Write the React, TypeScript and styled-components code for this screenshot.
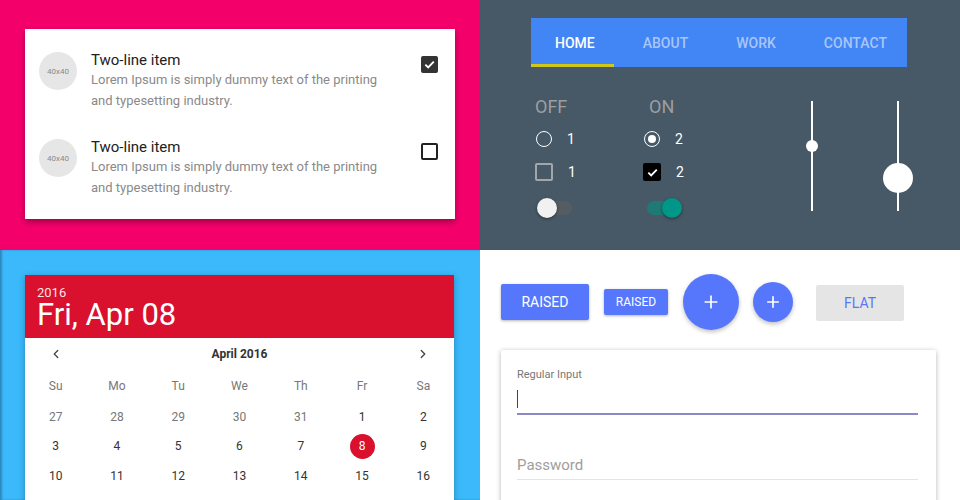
import React from 'react';
import styled, { createGlobalStyle } from 'styled-components';
import { ChevronLeft, ChevronRight, Plus } from 'lucide-react';

const GlobalStyle = createGlobalStyle`
    html, body {
        margin: 0;
        padding: 0;
        background: #fff;
    }
    body {
        font-family: Roboto, "Liberation Sans", sans-serif;
        -webkit-font-smoothing: antialiased;
    }
`;

const Page = styled.div`
    display: grid;
    grid-template-columns: 480px 480px;
    grid-template-rows: 250px 250px;
    width: 960px;
    height: 500px;
    overflow: hidden;
`;

const Quadrant = styled.section<{ $bg: string; $edge?: boolean }>`
    background: ${(p) => p.$bg};
    box-shadow: ${(p) => (p.$edge ? 'inset 2px 0 2px rgba(0,0,0,0.25)' : 'none')};
    overflow: hidden;
    position: relative;
`;

/* ---------- list card ---------- */

const ListCard = styled.div`
    margin: 29px 0 0 25px;
    width: 430px;
    height: 190px;
    box-sizing: border-box;
    padding: 22px 17px 0 14px;
    background: #fff;
    box-shadow: 0 3px 6px rgba(0, 0, 0, 0.35);
    display: flex;
    flex-direction: column;
    gap: 27px;
`;

const ListItem = styled.div`
    display: flex;
    align-items: flex-start;
`;

const Avatar = styled.div`
    width: 38px;
    height: 38px;
    margin-top: 1px;
    border-radius: 50%;
    background: #e6e6e6;
    color: #8a8a8a;
    font-size: 8px;
    display: flex;
    align-items: center;
    justify-content: center;
    flex-shrink: 0;
`;

const ItemText = styled.div`
    margin-left: 14px;
    width: 310px;
`;

const ItemTitle = styled.div`
    font-size: 15px;
    line-height: 18px;
    color: #212121;
`;

const ItemSub = styled.div`
    font-size: 13px;
    line-height: 21px;
    color: #8a8a8a;
`;

const CardCheck = styled.div<{ $on?: boolean }>`
    margin: 5px 0 0 auto;
    width: 17px;
    height: 17px;
    box-sizing: border-box;
    border-radius: 2px;
    background: ${(p) => (p.$on ? '#333' : 'transparent')};
    border: ${(p) => (p.$on ? 'none' : '2px solid #222')};
    display: flex;
    align-items: center;
    justify-content: center;
`;

const Check = () => (
    <svg width="13" height="13" viewBox="0 0 14 14">
        <path d="M2.5 7.2 L5.6 10.2 L11.6 3.8" fill="none" stroke="#fff" strokeWidth="2" />
    </svg>
);

/* ---------- tabs + controls ---------- */

const TabBar = styled.nav`
    margin: 18px 0 0 51px;
    width: 376px;
    height: 49px;
    background: #4285f4;
    display: flex;
`;

const Tab = styled.div<{ $active?: boolean }>`
    position: relative;
    padding: 0 24px;
    display: flex;
    align-items: center;
    font-size: 14px;
    font-weight: 500;
    color: ${(p) => (p.$active ? '#fff' : 'rgba(255,255,255,0.55)')};
    &::after {
        content: '';
        display: ${(p) => (p.$active ? 'block' : 'none')};
        position: absolute;
        left: 0;
        bottom: 0;
        width: 83px;
        height: 3px;
        background: #cfc81a;
    }
`;

const Controls = styled.div`
    display: flex;
    margin-top: 29px;
    padding-left: 55px;
`;

const Column = styled.div`
    width: 108px;
    display: flex;
    flex-direction: column;
`;

const StateLabel = styled.div<{ $indent?: number }>`
    font-size: 18px;
    line-height: 22px;
    color: #9e9e9e;
    margin: 0 0 5px ${(p) => p.$indent ?? 0}px;
`;

const ControlRow = styled.div<{ $h: number }>`
    height: ${(p) => p.$h}px;
    display: flex;
    align-items: center;
    gap: 15px;
    color: #fff;
    font-size: 14px;
`;

const Radio = styled.div<{ $on?: boolean }>`
    width: 16px;
    height: 16px;
    box-sizing: border-box;
    border: 1.5px solid #fff;
    border-radius: 50%;
    margin-left: 1px;
    display: flex;
    align-items: center;
    justify-content: center;
    &::after {
        content: '';
        display: ${(p) => (p.$on ? 'block' : 'none')};
        width: 8px;
        height: 8px;
        border-radius: 50%;
        background: #fff;
    }
`;

const Box = styled.div<{ $on?: boolean }>`
    width: 18px;
    height: 18px;
    box-sizing: border-box;
    border-radius: 2px;
    background: ${(p) => (p.$on ? '#000' : 'transparent')};
    border: ${(p) => (p.$on ? 'none' : '2px solid #a3a7aa')};
    display: flex;
    align-items: center;
    justify-content: center;
`;

const Toggle = styled.div<{ $on?: boolean }>`
    position: relative;
    margin-left: ${(p) => (p.$on ? 4 : 2)}px;
    width: 35px;
    height: 14px;
    border-radius: 7px;
    background: ${(p) => (p.$on ? '#1f7a76' : '#555d63')};
`;

const Knob = styled.div<{ $on?: boolean }>`
    position: absolute;
    top: -3px;
    left: ${(p) => (p.$on ? 15 : 0)}px;
    width: 20px;
    height: 20px;
    border-radius: 50%;
    background: ${(p) => (p.$on ? '#009688' : '#f1f1f1')};
    box-shadow: 0 1px 3px rgba(0, 0, 0, 0.45);
`;

const SliderGroup = styled.div`
    display: flex;
    margin-left: 46px;
    margin-top: 5px;
    gap: 56px;
`;

const Slider = styled.div`
    position: relative;
    width: 30px;
    height: 110px;
    display: flex;
    justify-content: center;
    &::before {
        content: '';
        width: 2px;
        height: 100%;
        background: #fff;
    }
`;

const Thumb = styled.div<{ $size: number; $pos: number }>`
    position: absolute;
    left: 50%;
    top: ${(p) => p.$pos}px;
    width: ${(p) => p.$size}px;
    height: ${(p) => p.$size}px;
    transform: translate(-50%, -50%);
    border-radius: 50%;
    background: #fff;
`;

/* ---------- date picker ---------- */

const CalCard = styled.div`
    margin: 25px 0 0 25px;
    width: 429px;
    height: 260px;
    background: #fff;
    box-shadow: 0 2px 6px rgba(0, 0, 0, 0.3);
`;

const CalHeader = styled.div`
    background: #d9102e;
    color: #fff;
    height: 63px;
    box-sizing: border-box;
    padding: 10px 12px 0;
`;

const Year = styled.div`
    font-size: 13px;
    line-height: 15px;
    color: rgba(255, 255, 255, 0.9);
`;

const BigDate = styled.div`
    font-size: 31px;
    line-height: 29px;
`;

const CalGrid = styled.div`
    display: grid;
    grid-template-columns: repeat(7, 1fr);
    grid-template-rows: 32px 32px;
    grid-auto-rows: 29.5px;
`;

const MonthRow = styled.div`
    grid-column: 1 / -1;
    display: grid;
    grid-template-columns: repeat(7, 1fr);
    align-items: center;
    justify-items: center;
    color: #444;
`;

const MonthTitle = styled.div`
    grid-column: 2 / 7;
    font-size: 12px;
    font-weight: 700;
    color: #333;
`;

const WeekDay = styled.div`
    display: flex;
    align-items: center;
    justify-content: center;
    font-size: 12px;
    color: #777;
`;

const Day = styled.div<{ $muted?: boolean; $selected?: boolean }>`
    display: flex;
    align-items: center;
    justify-content: center;
    font-size: 12px;
    color: ${(p) => (p.$selected ? '#fff' : p.$muted ? '#777' : '#333')};
    span {
        width: 25px;
        height: 25px;
        border-radius: 50%;
        display: flex;
        align-items: center;
        justify-content: center;
        background: ${(p) => (p.$selected ? '#d9102e' : 'transparent')};
    }
`;

/* ---------- buttons + inputs ---------- */

const ButtonRow = styled.div`
    display: flex;
    align-items: center;
    height: 56px;
    margin: 24px 0 0 21px;
`;

const Raised = styled.button<{ $small?: boolean; $gap: number }>`
    margin-right: ${(p) => p.$gap}px;
    width: ${(p) => (p.$small ? 64 : 88)}px;
    height: ${(p) => (p.$small ? 26 : 36)}px;
    border: none;
    border-radius: 2px;
    background: #5677fc;
    color: #fff;
    font-family: inherit;
    font-size: ${(p) => (p.$small ? 12 : 14)}px;
    box-shadow: 0 1px 3px rgba(0, 0, 0, 0.3);
    padding: 0;
`;

const Fab = styled.button<{ $size: number; $gap: number }>`
    margin-right: ${(p) => p.$gap}px;
    width: ${(p) => p.$size}px;
    height: ${(p) => p.$size}px;
    border: none;
    border-radius: 50%;
    background: #5677fc;
    color: #fff;
    display: flex;
    align-items: center;
    justify-content: center;
    padding: 0;
    box-shadow: 0 2px 4px rgba(0, 0, 0, 0.25);
`;

const Flat = styled.button`
    width: 88px;
    height: 36px;
    margin-top: 2px;
    border: none;
    border-radius: 2px;
    background: #e5e5e5;
    color: #5677fc;
    font-family: inherit;
    font-size: 14px;
    padding: 0;
`;

const InputCard = styled.div`
    margin: 20px 0 0 21px;
    width: 435px;
    height: 200px;
    box-sizing: border-box;
    padding: 18px 18px 0 16px;
    background: #fff;
    border-radius: 2px;
    box-shadow: 0 1px 5px rgba(0, 0, 0, 0.3);
`;

const FieldLabel = styled.div`
    font-size: 11px;
    line-height: 13px;
    color: #777;
`;

const Field = styled.div<{ $focused?: boolean; $top: number }>`
    margin-top: ${(p) => p.$top}px;
    height: 29px;
    display: flex;
    align-items: center;
    border-bottom: ${(p) => (p.$focused ? '2px solid #8c8ac6' : '1px solid #e4e4e4')};
    font-size: 15px;
    color: #9e9e9e;
`;

const Caret = styled.span`
    width: 1px;
    height: 18px;
    background: #444;
`;

const days: { d: number; muted?: boolean }[] = [
    { d: 27, muted: true },
    { d: 28, muted: true },
    { d: 29, muted: true },
    { d: 30, muted: true },
    { d: 31, muted: true },
    ...Array.from({ length: 16 }, (_, i) => ({ d: i + 1 })),
];

const subText = 'Lorem Ipsum is simply dummy text of the printing and typesetting industry.';

const App = () => (
    <>
        <GlobalStyle />
        <Page>
            <Quadrant $bg="#f4006b">
                <ListCard>
                    {[true, false].map((checked, i) => (
                        <ListItem key={i}>
                            <Avatar>40x40</Avatar>
                            <ItemText>
                                <ItemTitle>Two-line item</ItemTitle>
                                <ItemSub>{subText}</ItemSub>
                            </ItemText>
                            <CardCheck $on={checked}>{checked && <Check />}</CardCheck>
                        </ListItem>
                    ))}
                </ListCard>
            </Quadrant>

            <Quadrant $bg="#475966">
                <TabBar>
                    <Tab $active>HOME</Tab>
                    <Tab>ABOUT</Tab>
                    <Tab>WORK</Tab>
                    <Tab>CONTACT</Tab>
                </TabBar>
                <Controls>
                    <Column>
                        <StateLabel>OFF</StateLabel>
                        <ControlRow $h={32}>
                            <Radio />1
                        </ControlRow>
                        <ControlRow $h={34}>
                            <Box />1
                        </ControlRow>
                        <ControlRow $h={38}>
                            <Toggle>
                                <Knob />
                            </Toggle>
                        </ControlRow>
                    </Column>
                    <Column>
                        <StateLabel $indent={6}>ON</StateLabel>
                        <ControlRow $h={32}>
                            <Radio $on />2
                        </ControlRow>
                        <ControlRow $h={34}>
                            <Box $on>
                                <Check />
                            </Box>
                            2
                        </ControlRow>
                        <ControlRow $h={38}>
                            <Toggle $on>
                                <Knob $on />
                            </Toggle>
                        </ControlRow>
                    </Column>
                    <SliderGroup>
                        <Slider>
                            <Thumb $size={12} $pos={45} />
                        </Slider>
                        <Slider>
                            <Thumb $size={30} $pos={77} />
                        </Slider>
                    </SliderGroup>
                </Controls>
            </Quadrant>

            <Quadrant $bg="#3bb9fb" $edge>
                <CalCard>
                    <CalHeader>
                        <Year>2016</Year>
                        <BigDate>Fri, Apr 08</BigDate>
                    </CalHeader>
                    <CalGrid>
                        <MonthRow>
                            <ChevronLeft size={14} strokeWidth={2.2} />
                            <MonthTitle>April 2016</MonthTitle>
                            <ChevronRight size={14} strokeWidth={2.2} />
                        </MonthRow>
                        {['Su', 'Mo', 'Tu', 'We', 'Th', 'Fr', 'Sa'].map((w) => (
                            <WeekDay key={w}>{w}</WeekDay>
                        ))}
                        {days.map(({ d, muted }) => (
                            <Day key={`${d}-${muted}`} $muted={muted} $selected={d === 8 && !muted}>
                                <span>{d}</span>
                            </Day>
                        ))}
                    </CalGrid>
                </CalCard>
            </Quadrant>

            <Quadrant $bg="#ffffff">
                <ButtonRow>
                    <Raised $gap={15}>RAISED</Raised>
                    <Raised $small $gap={15}>RAISED</Raised>
                    <Fab $size={56} $gap={14}>
                        <Plus size={20} strokeWidth={2} />
                    </Fab>
                    <Fab $size={40} $gap={23}>
                        <Plus size={18} strokeWidth={2.2} />
                    </Fab>
                    <Flat>FLAT</Flat>
                </ButtonRow>
                <InputCard>
                    <FieldLabel>Regular Input</FieldLabel>
                    <Field $focused $top={3}>
                        <Caret />
                    </Field>
                    <Field $top={35}>Password</Field>
                </InputCard>
            </Quadrant>
        </Page>
    </>
);

export default App;
